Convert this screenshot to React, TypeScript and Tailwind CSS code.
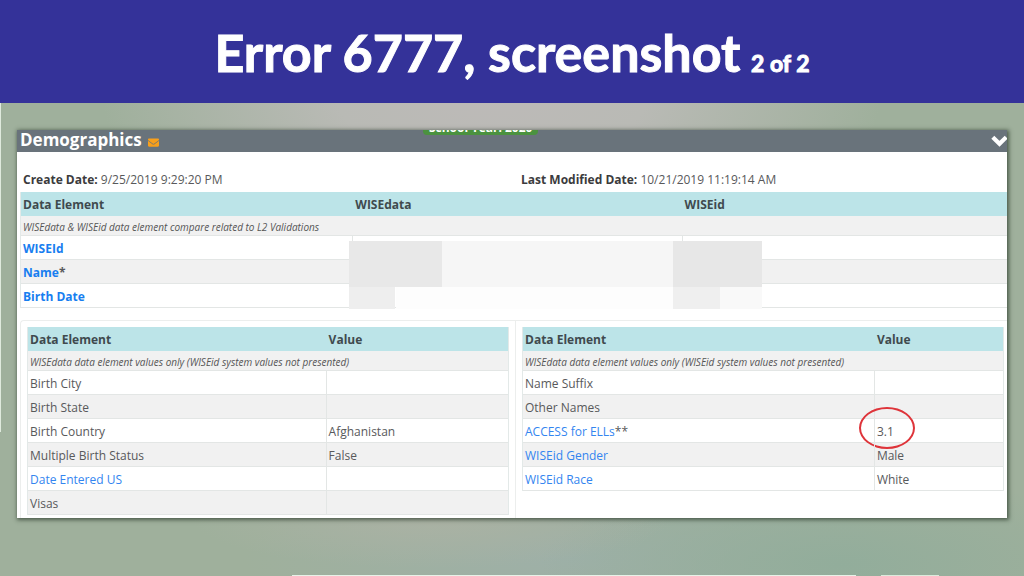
import type { ReactNode } from "react";
import { FaEnvelope } from "react-icons/fa";

type Row = { label: string; value?: string; link?: boolean; suffix?: string; marked?: boolean };

const birthRows: Row[] = [
  { label: "Birth City" },
  { label: "Birth State" },
  { label: "Birth Country", value: "Afghanistan" },
  { label: "Multiple Birth Status", value: "False" },
  { label: "Date Entered US", link: true },
  { label: "Visas" },
];

const studentRows: Row[] = [
  { label: "Name Suffix" },
  { label: "Other Names" },
  { label: "ACCESS for ELLs", value: "3.1", link: true, suffix: "**", marked: true },
  { label: "WISEid Gender", value: "Male", link: true },
  { label: "WISEid Race", value: "White", link: true },
];

const compareRows = [
  { label: "WISEId", suffix: "" },
  { label: "Name", suffix: "*" },
  { label: "Birth Date", suffix: "" },
];

function HeadCell({ children }: { children: ReactNode }) {
  return <th className="h-6 px-[3px] pt-0.5 text-left font-bold text-[#3f4a4e] first:pl-0.5">{children}</th>;
}

function Note({ span, children }: { span: number; children: ReactNode }) {
  return (
    <tr className="bg-[#f1f1f1]">
      <td colSpan={span} className="h-5 border-b border-[#e3e6e5] px-0.5 pt-0.5 text-[10px] italic leading-4 text-[#555]">
        {children}
      </td>
    </tr>
  );
}

function ValueTable({ rows, cols }: { rows: Row[]; cols: [string, string] }) {
  return (
    <table className="w-full table-fixed border-separate border-spacing-0 border-x border-[#e3e9e8]">
      <colgroup>
        <col className={cols[0]} />
        <col className={cols[1]} />
      </colgroup>
      <thead>
        <tr className="bg-[#bce4e8]">
          <HeadCell>Data Element</HeadCell>
          <HeadCell>Value</HeadCell>
        </tr>
      </thead>
      <tbody>
        <Note span={2}>WISEdata data element values only (WISEid system values not presented)</Note>
        {rows.map((row) => (
          <tr key={row.label} className="even:bg-white odd:bg-[#f1f1f1]">
            <td className="h-6 border-b border-[#e3e6e5] px-0.5 pt-0.5">
              {row.link ? (
                <a href="#" className="text-[#3385f0]">
                  {row.label}
                </a>
              ) : (
                row.label
              )}
              {row.suffix}
            </td>
            <td className="relative h-6 border-b border-l border-[#e3e6e5] px-0.5 pt-0.5">
              {row.value}
              {row.marked && (
                <span className="absolute -left-4 -top-3 h-[42px] w-14 rounded-[50%] border-2 border-[#de343a]" />
              )}
            </td>
          </tr>
        ))}
      </tbody>
    </table>
  );
}

function Redaction() {
  return (
    <div aria-hidden="true" className="absolute -bottom-px left-[33.3%] top-[49px] flex w-[41.9%]">
      <div className="flex w-[22.5%] flex-col">
        <div className="h-[46px] bg-[#e8e8e8]" />
        <div className="w-1/2 grow bg-[#eeeeee]" />
      </div>
      <div className="flex grow flex-col">
        <div className="h-[46px] bg-[#f6f6f6]" />
        <div className="-ml-[46px] grow bg-[#fdfdfd]" />
      </div>
      <div className="flex w-[21.5%] flex-col">
        <div className="h-[46px] bg-[#e7e7e7]" />
        <div className="flex grow">
          <div className="w-[52%] bg-[#efefef]" />
          <div className="grow bg-[#f9f9f9]" />
        </div>
      </div>
    </div>
  );
}

export default function App() {
  return (
    <div className="relative flex min-h-screen flex-col bg-[#9fb09c] bg-[radial-gradient(ellipse_390px_190px_at_48%_16%,#bdbab8_0%,#b9bab5_40%,#b9bab500_100%),radial-gradient(ellipse_240px_50px_at_42%_90%,#abb2a4_0%,#abb2a400_100%),radial-gradient(ellipse_300px_90px_at_82%_98%,#92ad9b_0%,#92ad9b00_100%),radial-gradient(ellipse_330px_80px_at_56%_97%,#9eb0a8_0%,#9eb0a800_100%)]">
      <header className="flex h-[103px] items-center justify-center bg-[#343299]">
        <h1 className="whitespace-nowrap font-['Lato',sans-serif] text-[52px] font-bold leading-none text-white [-webkit-text-stroke:1px_white]">
          Error 6777, screenshot <span className="-ml-0.5 text-[23px]">2 of 2</span>
        </h1>
      </header>

      <main className="mx-[17px] mb-[58px] mt-[27px] bg-white font-['Open_Sans','Noto_Sans',sans-serif] text-[12px] leading-4 text-[#58595b] shadow-[1px_1px_4px_1px_rgba(40,55,40,0.7)]">
        <section className="overflow-hidden">
          <div className="relative flex h-[22px] items-center justify-between bg-[#69737b] pl-[3px]">
            <h2 className="flex items-center gap-1.5 whitespace-nowrap pb-0.5 text-[17px] font-bold leading-5 text-white">
              Demographics
              <FaEnvelope className="mt-1 size-[11px] text-[#f9a01b]" />
            </h2>
            <span className="absolute -top-[11px] left-[41%] h-4 whitespace-nowrap rounded-sm bg-[#4b923f] px-1.5 text-[12px] font-bold leading-[18px] text-white">
              School Year: 2020
            </span>
            <button type="button" aria-label="Collapse Demographics" className="-mr-px text-white">
              <svg viewBox="0 0 17 13" className="h-[13px] w-[17px]" fill="none" stroke="currentColor" strokeWidth="4.2">
                <path d="M1.8 2.2 8.5 8.7 15.2 2.2" />
              </svg>
            </button>
          </div>

          <div className="grid grid-cols-[498fr_486fr] pb-1 pl-1.5 pt-5">
            <p>
              <strong className="text-[#3b3b3d]">Create Date:</strong> 9/25/2019 9:29:20 PM
            </p>
            <p>
              <strong className="text-[#3b3b3d]">Last Modified Date:</strong> 10/21/2019 11:19:14 AM
            </p>
          </div>

          <div className="relative ml-[3px]">
            <table className="w-full table-fixed border-separate border-spacing-0 border-l border-[#e3e9e8]">
              <colgroup>
                <col className="w-[33.6%]" />
                <col className="w-[33.4%]" />
                <col className="w-[33%]" />
              </colgroup>
              <thead>
                <tr className="bg-[#bce4e8]">
                  <HeadCell>Data Element</HeadCell>
                  <HeadCell>WISEdata</HeadCell>
                  <HeadCell>WISEid</HeadCell>
                </tr>
              </thead>
              <tbody>
                <Note span={3}>WISEdata &amp; WISEid data element compare related to L2 Validations</Note>
                {compareRows.map((row) => (
                  <tr key={row.label} className="even:bg-white odd:bg-[#f1f1f1]">
                    <td className="h-6 border-b border-[#e3e6e5] px-0.5 pt-0.5 font-bold">
                      <a href="#" className="text-[#177ef0]">
                        {row.label}
                      </a>
                      {row.suffix}
                    </td>
                    <td className="border-b border-l border-[#e3e6e5]" />
                    <td className="border-b border-l border-[#e3e6e5]" />
                  </tr>
                ))}
              </tbody>
            </table>
            <Redaction />
          </div>

          <div className="ml-[3px] mt-3 grid grid-cols-[495fr_492fr]">
            <div className="rounded-tl border-l border-t border-[#eceeed] p-1.5 pb-[3px]">
              <ValueTable rows={birthRows} cols={["w-[62%]", "w-[38%]"]} />
            </div>
            <div className="border-l border-t border-[#eceeed] py-1.5 pl-1.5 pr-[3px]">
              <ValueTable rows={studentRows} cols={["w-[73.1%]", "w-[26.9%]"]} />
            </div>
          </div>
        </section>
      </main>

      <div aria-hidden="true" className="absolute left-0 top-[103px] h-[329px] w-px bg-[#dfeadd]" />
      <div aria-hidden="true" className="absolute bottom-0 left-[28.5%] right-[16.4%] h-px bg-[#e8f2e8]" />
      <div aria-hidden="true" className="absolute bottom-0 left-[86%] right-[8.3%] h-px bg-[#dcebdc]" />
    </div>
  );
}
